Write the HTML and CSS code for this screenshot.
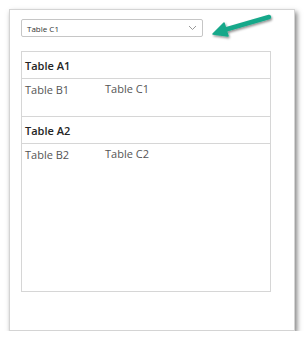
FILE: index.html
```html
<!DOCTYPE html>
<html lang="en">
    <head>
        <meta charset="UTF-8" />
        <meta name="viewport" content="width=device-width, initial-scale=1.0" />
        <link rel="stylesheet" href="styles.css">
    </head>
    <body>
        <div class="frame">
            <div class="dropdown">
                <span>Table C1</span>
                <svg class="chevron" width="9" height="6" viewBox="0 0 9 6"><path d="M1 1 L4.5 4.5 L8 1" fill="none" stroke="#999" stroke-width="1"/></svg>
            </div>
            <svg class="arrow" width="70" height="30" viewBox="0 0 70 30">
                <defs>
                    <filter id="sh" x="-20%" y="-40%" width="140%" height="180%">
                        <feDropShadow dx="1" dy="1.5" stdDeviation="1" flood-color="#000" flood-opacity="0.45"/>
                    </filter>
                </defs>
                <g filter="url(#sh)">
                    <path d="M59 5 L14 18" stroke="#17a88a" stroke-width="4.5" stroke-linecap="round" fill="none"/>
                    <path d="M3 22 L14 11 L18 24 Z" fill="#17a88a" stroke="#17a88a" stroke-width="1.5" stroke-linejoin="round"/>
                </g>
            </svg>
            <div class="table">
                <div class="group">
                    <div class="head">Table A1</div>
                    <div class="row"><span class="cell">Table B1</span><span class="cell">Table C1</span></div>
                </div>
                <div class="group">
                    <div class="head">Table A2</div>
                    <div class="row"><span class="cell">Table B2</span><span class="cell">Table C2</span></div>
                </div>
            </div>
        </div>
    </body>
</html>
```
FILE: styles.css
```css
* {
    box-sizing: border-box;
}
body {
    margin: 0;
    background: #fff;
    font-family: "Open Sans", "Noto Sans", sans-serif;
    color: #444;
}
.frame {
    position: relative;
    margin: 9px 0 0 9px;
    width: 286px;
    height: 322px;
    padding: 9px 0 0 11px;
    border: 1px solid #d4d4d4;
    background: #fff;
    box-shadow: 2px 3px 5px rgba(0, 0, 0, 0.5);
}
.dropdown {
    display: flex;
    align-items: center;
    justify-content: space-between;
    width: 182px;
    height: 18px;
    padding: 0 5px 0 5px;
    border: 1px solid #c6c6c6;
    border-radius: 2px;
    font-size: 8px;
    color: #333;
}
.arrow {
    position: absolute;
    top: 2px;
    left: 200px;
}
.table {
    margin-top: 14px;
    width: 250px;
    height: 241px;
    border: 1.5px solid #d6d6d6;
}
.head {
    height: 27px;
    padding: 6px 0 0 3px;
    font-size: 11px;
    font-weight: 600;
    color: #252525;
    border-bottom: 1.5px solid #d6d6d6;
}
.group:first-child .row {
    height: 38px;
    border-bottom: 1.5px solid #d6d6d6;
}
.row {
    display: flex;
    padding: 2px 0 0 3px;
    font-size: 11px;
    color: #555;
}
.cell:first-child {
    width: 80px;
    padding-top: 1px;
}
```
